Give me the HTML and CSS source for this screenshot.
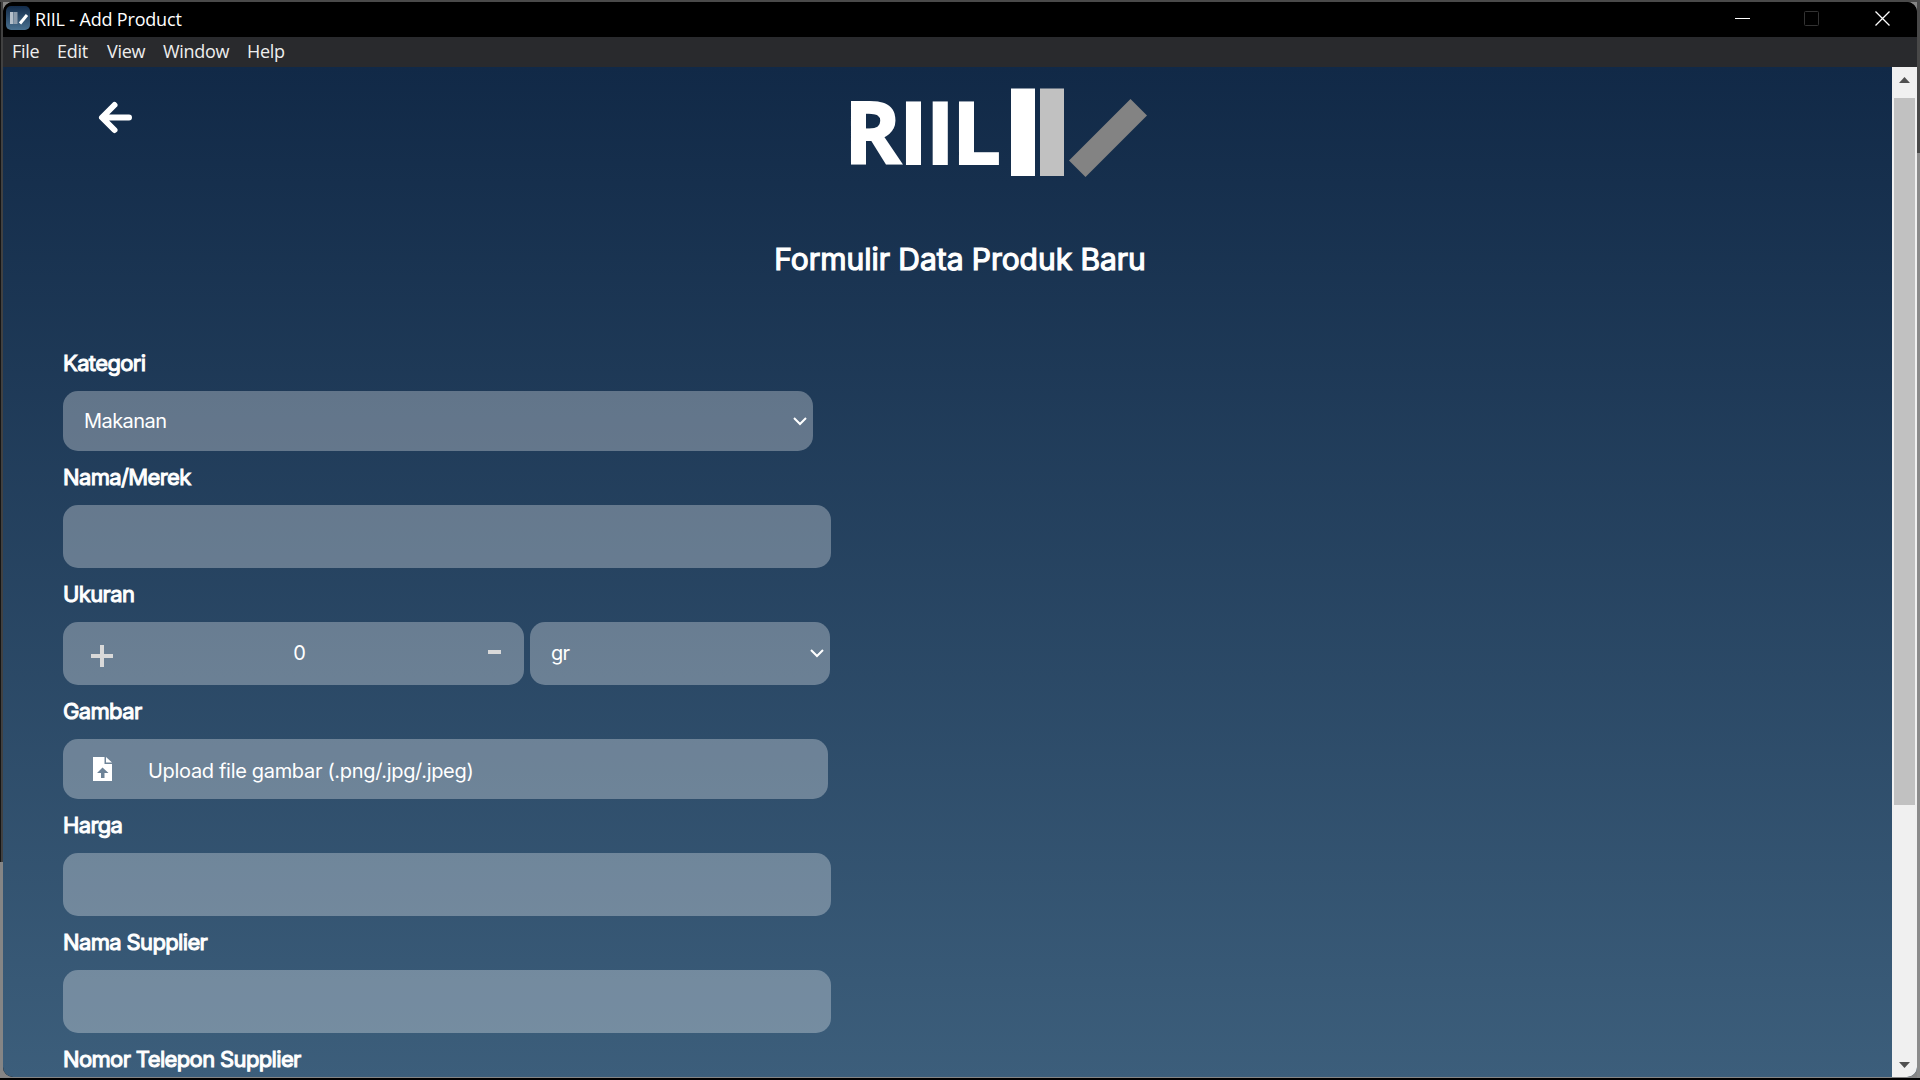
FILE: index.html
```html
<!DOCTYPE html>
<html lang="id">
<head>
<meta charset="utf-8">
<title>RIIL - Add Product</title>
<link rel="stylesheet" href="styles.css">
</head>
<body>
<div class="window">
  <header class="titlebar">
    <svg class="app-icon" width="24" height="24" viewBox="0 0 24 24">
      <defs><linearGradient id="ic" x1="0" y1="0" x2="0" y2="1"><stop offset="0" stop-color="#122b4a"/><stop offset="1" stop-color="#4a7190"/></linearGradient></defs>
      <rect width="24" height="24" rx="5" fill="url(#ic)"/>
      <path d="M4 6h3.500v12H4z" fill="#b4bfca"/><path d="M8 6h3.500v12H8z" fill="#8c9bab"/>
      <path d="M14 17.500L21 9" stroke="#fff" stroke-width="3"/>
    </svg>
    <span class="title">RIIL - Add Product</span>
    <svg class="controls" width="180" height="35" viewBox="0 0 180 35" fill="none">
      <path d="M0 16.500h15" stroke="#fff"/>
      <rect x="69.500" y="9.500" width="14" height="14" rx="1" stroke="#333"/>
      <path d="M140.500 9.500l14 14m0-14l-14 14" stroke="#fff" stroke-width="1.300"/>
    </svg>
  </header>
  <nav class="menubar">
    <span class="m-file">File</span><span class="m-edit">Edit</span><span class="m-view">View</span><span class="m-window">Window</span><span class="m-help">Help</span>
  </nav>
  <div class="viewport">
    <main class="page">
      <div class="top">
        <svg class="back" width="36" height="36" viewBox="0 0 36 36" fill="none" stroke="#fff" stroke-width="6" stroke-linecap="round" stroke-linejoin="round"><path d="M17.500 5L5 17.500 17.500 30M6 17.500h26"/></svg>
        <svg class="logo" width="300" height="92" viewBox="0 0 300 92">
          <text class="logo-text" y="75.500" x="3.300 58.300 85 111.300">RIIL</text>
          <path d="M170 .4h24v87.600h-24z" fill="#fff"/><path d="M199 .4h24v87.600h-24z" fill="#c1c1c1"/>
          <path d="M289.500 11L306 27.500 244.500 89 228 72.500z" fill="#838383"/>
        </svg>
      </div>
      <h1>Formulir Data Produk Baru</h1>
      <form class="form">
        <label>Kategori</label>
        <div class="field select category"><span class="value">Makanan</span><svg class="chev" width="14" height="9" viewBox="0 0 14 9"><path d="M1 1l6 6 6-6"/></svg></div>
        <label>Nama/Merek</label>
        <div class="field text"></div>
        <label>Ukuran</label>
        <div class="row">
          <div class="field stepper"><svg width="22" height="22" viewBox="0 0 22 22"><path d="M9 0h4v9h9v4h-9v9H9v-9H0V9h9z"/></svg><span class="value">0</span><svg class="minus" width="13" height="4"><path d="M0 0h13v4H0z"/></svg></div>
          <div class="field select unit"><span class="value">gr</span><svg class="chev" width="14" height="9" viewBox="0 0 14 9"><path d="M1 1l6 6 6-6"/></svg></div>
        </div>
        <label>Gambar</label>
        <div class="field upload"><svg width="19" height="24" viewBox="0 0 19 24"><path fill="#fff" fill-rule="evenodd" d="M0 0h11.500v7H19v17H0zM9.500 10.500L4 16h4v5h3.500v-5h4z"/><path fill="#fff" d="M13 0l6 5.500h-6z"/></svg><span class="value">Upload file gambar (.png/.jpg/.jpeg)</span></div>
        <label>Harga</label>
        <div class="field text"></div>
        <label>Nama Supplier</label>
        <div class="field text"></div>
        <label>Nomor Telepon Supplier</label>
      </form>
    </main>
    <aside class="scrollbar">
      <svg width="11" height="6"><path d="M0 6L5.500 0 11 6z"/></svg>
      <div class="thumb"></div>
      <svg class="down" width="11" height="6"><path d="M0 0h11L5.500 6z"/></svg>
    </aside>
  </div>
</div>
</body>
</html>
```
FILE: styles.css
```css
* { box-sizing: border-box; }
body {
  margin: 0;
  width: 1920px;
  height: 1080px;
  padding: 2px 3px 3px;
  overflow: hidden;
  background:
    linear-gradient(#000, #000) 0 1078px / 1920px 2px no-repeat,
    linear-gradient(#4a4a4a, #4a4a4a) 0 0 / 1920px 2px no-repeat,
    linear-gradient(#484848 0 153px, #8b8b8b 153px) 1917px 0 / 3px 1080px no-repeat,
    linear-gradient(90deg, #151515 1px, #414141 1px) 0 0 / 3px 862px no-repeat,
    #858585;
  font-family: Inter, sans-serif;
  color: #fff;
}
.window {
  height: 1075px;
  display: grid;
  grid-template-rows: 35px 30px 1010px;
  border-radius: 10px;
  overflow: hidden;
  background: #000;
}
.titlebar { display: flex; align-items: center; padding-left: 3px; background: #000; }
.app-icon { margin-bottom: 3px; }
.title { margin: 0 0 0 5px; font: 18px/33px "Open Sans", sans-serif; letter-spacing: -0.18px; }
.controls { margin-left: auto; margin-right: 2px; }
.menubar { display: flex; background: #292a2d; font: 18px/29px "Open Sans", sans-serif; letter-spacing: -0.3px; color: #eee; }
.menubar span { white-space: nowrap; }
.m-file { width: 45px; margin-left: 9px; }
.m-edit { width: 50px; }
.m-view { width: 56px; }
.m-window { width: 84px; }
.viewport {
  display: grid;
  grid-template-columns: 1889px 25px;
  grid-template-rows: 1010px;
  background: linear-gradient(#112947, #3c5e7b);
}
.page { min-width: 0; padding: 0 60px; overflow: hidden; }
.top { height: 156px; display: flex; }
.back { margin: 33px 0 0 34px; }
.logo { margin: 21px 0 0 708px; overflow: visible; }
.logo-text { font: bold 86px "Open Sans", sans-serif; fill: #fff; stroke: #fff; stroke-width: 2px; }
h1 { margin: 0 -25px 0 0; text-align: center; font-size: 30px; line-height: 72px; font-weight: 400; letter-spacing: -0.05px; -webkit-text-stroke: 1.2px #fff; }
.form { margin-top: 42px; }
label { display: block; height: 54px; font-size: 22px; line-height: 53px; letter-spacing: -0.64px; -webkit-text-stroke: 1px #fff; }
.field { display: flex; align-items: center; height: 63px; border-radius: 15px; background: rgba(255, 255, 255, 0.3); font-size: 20px; }
.text { width: 768px; }
.select { justify-content: space-between; padding: 0 6px 0 21px; }
.category { width: 750px; height: 60px; letter-spacing: -0.55px; }
.row { display: flex; gap: 6px; }
.stepper { width: 461px; padding: 0 23px 0 28px; justify-content: space-between; }
.stepper svg { fill: #d9d9d9; margin-top: 5px; }
.stepper .minus { margin: 0 0 3px; }
.stepper .value { margin: 0 0 2px -2px; }
.unit { width: 300px; letter-spacing: -0.8px; }
.unit .value { margin-bottom: 2px; }
.upload { width: 765px; height: 60px; padding-left: 29.5px; gap: 36.5px; letter-spacing: -0.32px; }
.upload .value { padding-top: 3px; }
.chev { fill: none; stroke: #fff; stroke-width: 2; }
.scrollbar { display: flex; flex-direction: column; align-items: center; padding-top: 10px; background: #f0f0f0; }
.scrollbar svg { fill: #505050; flex: none; }
.thumb { width: 21px; height: 707px; margin-top: 15px; background: #c1c1c1; }
.down { margin-top: auto; margin-bottom: 9px; }
```
